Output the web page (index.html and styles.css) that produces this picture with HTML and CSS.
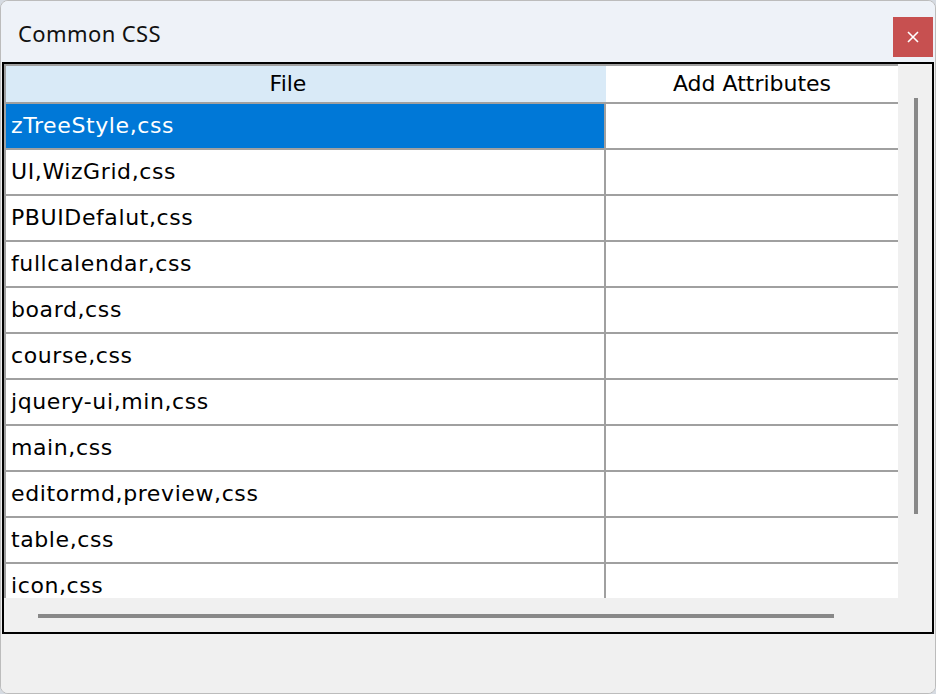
FILE: index.html
```html
<!DOCTYPE html>
<html>
<head>
<meta charset="utf-8">
<link rel="stylesheet" href="styles.css">
</head>
<body>
<div class="window">
  <div class="titlebar">
    <div class="title">Common CSS</div>
    <div class="close">
      <svg width="12" height="12" viewBox="0 0 12 12"><path d="M1 1L11 11M11 1L1 11" stroke="#fff" stroke-width="1.6"/></svg>
    </div>
  </div>
  <div class="panel">
    <div class="grid">
      <div class="row head">
        <div class="cell c1 hfile">File</div>
        <div class="cell c2 hattr">Add Attributes</div>
      </div>
      <div class="row sel"><div class="cell c1">zTreeStyle,css</div><div class="cell c2"></div></div>
      <div class="row"><div class="cell c1">UI,WizGrid,css</div><div class="cell c2"></div></div>
      <div class="row"><div class="cell c1">PBUIDefalut,css</div><div class="cell c2"></div></div>
      <div class="row"><div class="cell c1">fullcalendar,css</div><div class="cell c2"></div></div>
      <div class="row"><div class="cell c1">board,css</div><div class="cell c2"></div></div>
      <div class="row"><div class="cell c1">course,css</div><div class="cell c2"></div></div>
      <div class="row"><div class="cell c1">jquery-ui,min,css</div><div class="cell c2"></div></div>
      <div class="row"><div class="cell c1">main,css</div><div class="cell c2"></div></div>
      <div class="row"><div class="cell c1">editormd,preview,css</div><div class="cell c2"></div></div>
      <div class="row"><div class="cell c1">table,css</div><div class="cell c2"></div></div>
      <div class="row"><div class="cell c1">icon,css</div><div class="cell c2"></div></div>
    </div>
    <div class="vscroll"><div class="vthumb"></div></div>
    <div class="hscroll"><div class="hthumb"></div></div>
    <div class="corner"></div>
  </div>
  <div class="footer"></div>
</div>
</body>
</html>
```

FILE: styles.css
```css
* { box-sizing: border-box; }
html, body { margin: 0; padding: 0; }
body {
  background: #d6dbe2;
  width: 936px;
  height: 694px;
  overflow: hidden;
}
.window {
  width: 936px;
  height: 694px;
  border: 1px solid #bcbcbc;
  border-radius: 8px;
  overflow: hidden;
  background: #f0f0f0;
  display: flex;
  flex-direction: column;
}
.titlebar {
  height: 61px;
  flex: none;
  background: #eef2f8;
  display: flex;
  align-items: flex-start;
}
.title {
  font-family: "Noto Sans", "Open Sans", sans-serif;
  font-size: 22px;
  letter-spacing: 0.4px;
  color: #111;
  padding-left: 17px;
  line-height: 28px;
  margin-top: 18px;
}
.close {
  margin-left: auto;
  margin-right: 2px;
  margin-top: 16px;
  width: 40px;
  height: 40px;
  background: #c75050;
  display: flex;
  align-items: center;
  justify-content: center;
}
.close svg { display: block; }
.panel {
  flex: none;
  margin: 0 1px;
  height: 572px;
  border: 2px solid #000;
  background: #f0f0f0;
  display: grid;
  grid-template-columns: 894px 34px;
  grid-template-rows: 534px 34px;
}
.grid {
  overflow: hidden;
  background: #f0f0f0;
}
.row {
  display: flex;
  height: 46px;
  border-bottom: 2px solid #a0a0a0;
  background: #fff;
}
.cell {
  font-family: "DejaVu Sans", sans-serif;
  font-size: 22px;
  letter-spacing: 0.6px;
  color: #000;
  line-height: 44px;
  white-space: nowrap;
}
.c1 {
  width: 602px;
  border-left: 2px solid #a0a0a0;
  border-right: 2px solid #a0a0a0;
  padding-left: 5px;
}
.c2 {
  width: 292px;
}
.sel .c1 {
  background: #0078d7;
  color: #fff;
}
.row.head {
  height: 40px;
  border-top: 2px solid #a0a0a0;
}
.head .cell {
  line-height: 36px;
  text-align: center;
  letter-spacing: 0;
}
.hfile {
  background: #d9eaf7;
  border-right: none;
  padding-left: 0;
  padding-right: 36px;
}
.hattr { background: #fff; }
.vscroll {
  padding-top: 34px;
  padding-left: 16px;
}
.vthumb {
  width: 4px;
  height: 416px;
  background: #888;
}
.hscroll {
  padding-top: 16px;
  padding-left: 34px;
}
.hthumb {
  width: 796px;
  height: 4px;
  background: #888;
}
.footer {
  flex: 1;
  background: #f0f0f0;
}
```
